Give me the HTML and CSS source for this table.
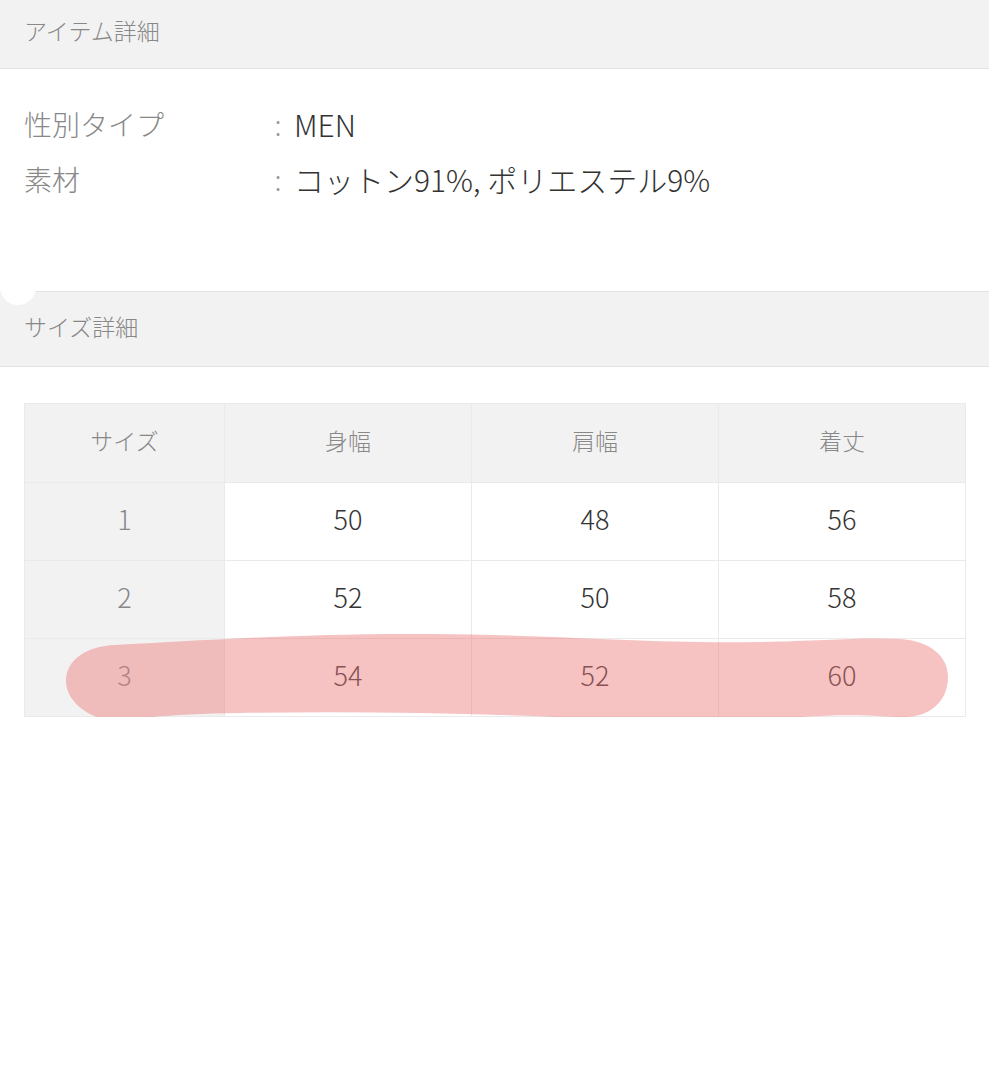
FILE: index.html
```html
<!DOCTYPE html>
<html lang="ja">
<head>
    <meta charset="utf-8">
    <title>アイテム詳細</title>
    <link rel="stylesheet" href="styles.css">
</head>
<body>
    <div class="section-head">アイテム詳細</div>

    <div class="item-detail">
        <div class="detail-row">
            <span class="detail-label">性別タイプ</span>
            <span class="colon">:</span>
            <span class="detail-value">MEN</span>
        </div>
        <div class="detail-row">
            <span class="detail-label">素材</span>
            <span class="colon">:</span>
            <span class="detail-value">コットン91%, ポリエステル9%</span>
        </div>
    </div>

    <div class="section-head size-head">
        <span class="dot"></span>
        サイズ詳細
    </div>

    <div class="size-wrap">
        <table class="size-table">
            <thead>
                <tr>
                    <th class="col-size">サイズ</th>
                    <th>身幅</th>
                    <th>肩幅</th>
                    <th>着丈</th>
                </tr>
            </thead>
            <tbody>
                <tr><td class="col-size">1</td><td>50</td><td>48</td><td>56</td></tr>
                <tr><td class="col-size">2</td><td>52</td><td>50</td><td>58</td></tr>
                <tr><td class="col-size">3</td><td>54</td><td>52</td><td>60</td></tr>
            </tbody>
        </table>
        <!-- hand-drawn highlight over the last row -->
        <svg class="marker" viewBox="24 402 942 330" width="942" height="330">
            <path d="M115 644 C200 640 300 632 430 633 C560 634 650 643 760 641 C820 640 860 636 900 638 C930 640 948 655 948 676 C948 700 930 716 905 716 C880 716 860 712 800 716 C740 720 680 722 600 718 C480 712 360 710 240 712 C180 713 140 716 125 720 C90 722 66 700 66 680 C66 658 88 645 115 644 Z"/>
        </svg>
    </div>
</body>
</html>
```

FILE: styles.css
```css
body {
    margin: 0;
    background: #fff;
    font-family: "Noto Sans CJK JP", "Noto Sans", sans-serif;
    font-weight: 300;
    color: #333;
}
.section-head {
    position: relative;
    background: #f2f2f2;
    border-bottom: 1px solid #e2e2e2;
    height: 68px;
    line-height: 60px;
    padding-left: 24px;
    font-size: 23px;
    color: #888;
}
.size-head {
    border-top: 1px solid #e2e2e2;
    height: 74px;
    line-height: 68px;
}
.dot {
    position: absolute;
    left: 0;
    top: -23px;
    width: 36px;
    height: 36px;
    border-radius: 50%;
    background: #fff;
}
.item-detail {
    padding: 28px 24px 84px;
}
.detail-row {
    display: flex;
    height: 55px;
    line-height: 55px;
    font-size: 28px;
}
.detail-label {
    width: 238px;
    color: #888;
}
.colon {
    width: 32px;
    text-align: center;
    color: #999;
}
.detail-value {
    font-size: 30px;
    color: #333;
}
.size-wrap {
    position: relative;
    margin: 36px 23px 0 24px;
}
.size-table {
    width: 942px;
    border-collapse: collapse;
    border: 1px solid #e4e4e4;
}
.size-table th,
.size-table td {
    border: 1px solid #eaeaea;
    text-align: center;
    height: 71px;
    padding: 0 0 6px;
}
.size-table th {
    background: #f2f2f2;
    font-weight: 300;
    font-size: 23px;
    color: #888;
    height: 72px;
}
.size-table td {
    font-size: 27px;
    color: #333;
}
.size-table .col-size {
    width: 199px;
    background: #f2f2f2;
    color: #888;
}
.marker {
    position: absolute;
    left: 0;
    top: 0;
    overflow: visible;
    pointer-events: none;
}
.marker path {
    fill: rgba(235, 120, 120, 0.45);
}
```
